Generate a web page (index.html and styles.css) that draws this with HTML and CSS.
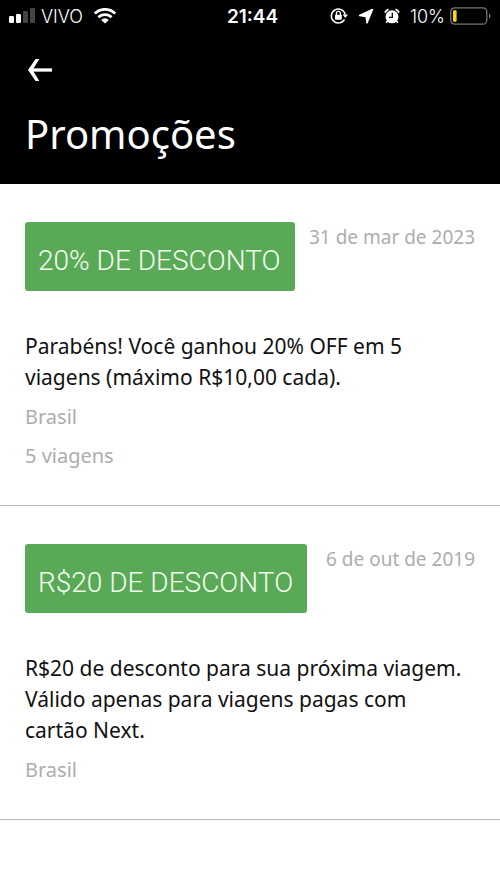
FILE: index.html
```html
<!DOCTYPE html>
<html lang="pt-BR">
<head>
<meta charset="utf-8">
<meta name="viewport" content="width=device-width, initial-scale=1">
<title>Promoções</title>
<link rel="stylesheet" href="styles.css">
</head>
<body>
<header class="header">
  <div class="status">
    <div class="status-side">
      <svg width="28" height="16" viewBox="0 0 28 16" aria-hidden="true">
        <g fill="#fff"><rect x="1" y="8" width="5" height="7" rx="1.3"/><rect x="8" y="6" width="5" height="9" rx="1.3"/></g>
        <g fill="#444"><rect x="15" y="3" width="5" height="12" rx="1.3"/><rect x="22" y="0" width="5" height="15" rx="1.3"/></g>
      </svg>
      <span class="carrier">VIVO</span>
      <svg width="24" height="16" viewBox="0 0 24 16" aria-hidden="true">
        <g fill="none" stroke="#fff" stroke-width="2.8"><path d="M1.8 5.6a14.4 14.4 0 0 1 20.4 0"/><path d="M5.4 9.3a9.3 9.3 0 0 1 13.2 0"/></g>
        <path d="M12 15.600 8.200 11.900a5.400 5.400 0 0 1 7.600 0z" fill="#fff"/>
      </svg>
    </div>
    <time class="clock">21:44</time>
    <div class="status-side status-end">
      <svg width="18" height="18" viewBox="0 0 18 18" aria-hidden="true">
        <path d="M14.500 12.300A7 7 0 1 1 15.200 7.500" fill="none" stroke="#fff" stroke-width="1.500"/>
        <path d="M12.600 7.600h5.400l-2.700 3.400z" fill="#fff"/>
        <rect x="5" y="7.800" width="6.800" height="5" rx=".7" fill="#fff"/>
        <path d="M6.400 8V6.300a2 2 0 0 1 4 0V8" fill="none" stroke="#fff" stroke-width="1.300"/>
      </svg>
      <svg width="16" height="16" viewBox="0 0 16 16" aria-hidden="true"><path d="M14.500 1.500 9 15 8 8.500 1.500 7.500z" fill="#fff" stroke="#fff" stroke-width="1.400" stroke-linejoin="round"/></svg>
      <svg width="16" height="16" viewBox="0 0 16 16" aria-hidden="true">
        <circle cx="8" cy="8.800" r="6.500" fill="#fff"/>
        <path d="M.9 4.700a8 8 0 0 1 3.600-3.500M15.100 4.700a8 8 0 0 0-3.600-3.500" fill="none" stroke="#fff" stroke-width="1.800"/>
        <path d="M8.300 4.700v4.600H5" fill="none" stroke="#000" stroke-width="1.300"/>
        <path d="m3.700 12.700-1.500 2M12.300 12.700l1.500 2" stroke="#fff" stroke-width="1.600"/>
      </svg>
      <span class="carrier">10%</span>
      <svg width="42" height="18" viewBox="0 0 42 18" aria-hidden="true">
        <rect x=".8" y=".8" width="36" height="16.400" rx="4" fill="none" stroke="#777" stroke-width="1.300"/>
        <path d="M39 6.200a3.300 3.300 0 0 1 0 5.600z" fill="#777"/>
        <rect x="3" y="3.200" width="3.600" height="11.600" rx="1" fill="#fbd70b"/>
      </svg>
    </div>
  </div>
  <button class="back" type="button" aria-label="Voltar">
    <svg width="26" height="24" viewBox="0 0 26 24" aria-hidden="true"><path d="M3 12H25" stroke="#fff" stroke-width="3.300"/><path d="M8.600 1h3.700L5.600 12l6.700 11H8.600L1 12z" fill="#fff"/></svg>
  </button>
  <h1 class="title">Promoções</h1>
</header>
<main>
  <article class="promo">
    <div class="promo-top">
      <h2 class="badge">20% DE DESCONTO</h2>
      <time class="muted date" datetime="2023-03-31">31 de mar de 2023</time>
    </div>
    <p class="description">Parabéns! Você ganhou 20% OFF em 5 viagens (máximo R$10,00 cada).</p>
    <p class="muted">Brasil</p>
    <p class="muted">5 viagens</p>
  </article>
  <article class="promo">
    <div class="promo-top">
      <h2 class="badge">R$20 DE DESCONTO</h2>
      <time class="muted date" datetime="2019-10-06">6 de out de 2019</time>
    </div>
    <p class="description">R$20 de desconto para sua próxima viagem. Válido apenas para viagens pagas com cartão Next.</p>
    <p class="muted">Brasil</p>
  </article>
</main>
</body>
</html>
```
FILE: styles.css
```css
* { box-sizing: border-box; }

body {
  margin: 0;
  background: #fff;
  color: #111;
  font-family: "Noto Sans", "Open Sans", sans-serif;
}

h1, h2, p { margin: 0; font-weight: 400; }
svg { display: block; flex: none; }

.header {
  background: #000;
  color: #fff;
  padding-bottom: 25px;
}

.status {
  display: grid;
  grid-template-columns: 1fr auto 1fr;
  align-items: center;
  height: 32px;
  padding: 0 8px;
  font-family: Inter, sans-serif;
  font-size: 18px;
}

.status-side { display: flex; align-items: center; gap: 10px; }
.status-side:first-child { gap: 5px; }
.status-side:first-child svg:last-child { margin-left: 5px; }
.status-end { justify-content: flex-end; }
.status-end .carrier { margin-right: -5px; }
.carrier { font-weight: 300; }
.clock { padding-left: 5px; font-size: 19px; font-weight: 600; }

.back {
  display: block;
  margin: 26px 0 0 27px;
  padding: 0;
  border: 0;
  background: none;
}

.title {
  margin-top: 27px;
  padding: 0 25px;
  font-size: 40px;
  line-height: 50px;
}

.promo {
  padding: 38px 25px 34px;
  border-bottom: 1px solid #b8b8b8;
}

.promo-top {
  display: flex;
  justify-content: space-between;
  align-items: flex-start;
}

.badge {
  padding: 20px 14px 12px 13px;
  border-radius: 3px;
  background: #5aa957;
  color: #f2ffef;
  font-family: Roboto, sans-serif;
  font-size: 28px;
  line-height: 37px;
  font-weight: 300;
  white-space: nowrap;
}

.description {
  margin-top: 40px;
  padding-right: 8px;
  font-size: 21px;
  line-height: 31px;
}

.muted {
  margin-top: 9px;
  color: #adadad;
  font-size: 20px;
  line-height: 30px;
}

.date {
  margin-top: 0;
  font-size: 19px;
  white-space: nowrap;
}
```
